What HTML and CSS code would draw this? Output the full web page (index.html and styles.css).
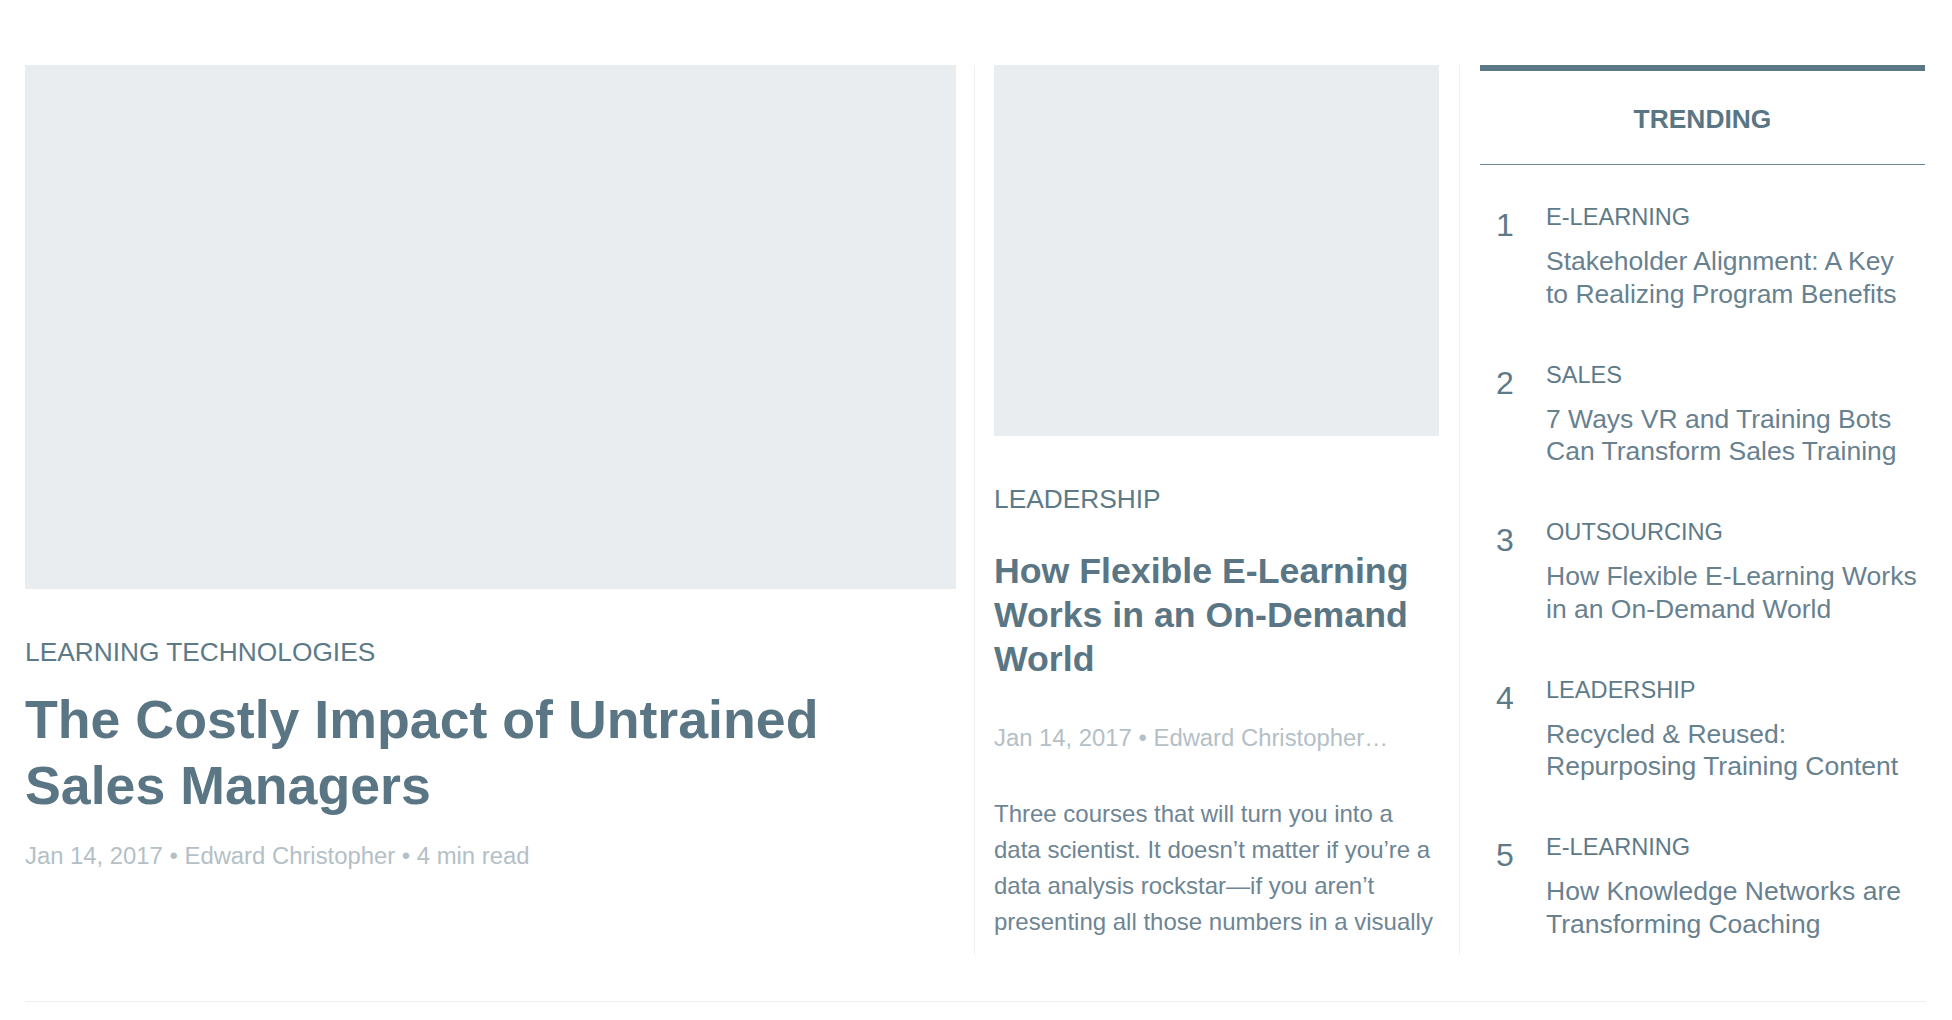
FILE: index.html
```html
<!DOCTYPE html>
<html lang="en">
<head>
<meta charset="utf-8">
<title>Featured stories</title>
<link rel="stylesheet" href="styles.css">
</head>
<body>
<main class="page">
  <section class="feature-section">
    <div class="feature-row">
      <article class="lead-story">
        <div class="thumb thumb-wide"></div>
        <div class="category">LEARNING TECHNOLOGIES</div>
        <h2 class="lead-title">The Costly Impact of Untrained Sales Managers</h2>
        <div class="meta">Jan 14, 2017 • Edward Christopher • 4 min read</div>
      </article>

      <article class="side-story">
        <div class="thumb thumb-tall"></div>
        <div class="category">LEADERSHIP</div>
        <h3 class="side-title">How Flexible E-Learning Works in an On-Demand World</h3>
        <div class="meta">Jan 14, 2017 • Edward Christopher…</div>
        <p class="excerpt">Three courses that will turn you into a data scientist. It doesn’t matter if you’re a data analysis rockstar—if you aren’t presenting all those numbers in a visually</p>
      </article>

      <aside class="trending">
        <h4 class="trending-head">TRENDING</h4>
        <ol class="trending-list">
          <li class="trend-item">
            <span class="trend-num">1</span>
            <div class="trend-body">
              <div class="trend-cat">E-LEARNING</div>
              <div class="trend-title">Stakeholder Alignment: A Key to Realizing Program Benefits</div>
            </div>
          </li>
          <li class="trend-item">
            <span class="trend-num">2</span>
            <div class="trend-body">
              <div class="trend-cat">SALES</div>
              <div class="trend-title">7 Ways VR and Training Bots Can Transform Sales Training</div>
            </div>
          </li>
          <li class="trend-item">
            <span class="trend-num">3</span>
            <div class="trend-body">
              <div class="trend-cat">OUTSOURCING</div>
              <div class="trend-title">How Flexible E-Learning Works in an On-Demand World</div>
            </div>
          </li>
          <li class="trend-item">
            <span class="trend-num">4</span>
            <div class="trend-body">
              <div class="trend-cat">LEADERSHIP</div>
              <div class="trend-title">Recycled &amp; Reused: Repurposing Training Content</div>
            </div>
          </li>
          <li class="trend-item">
            <span class="trend-num">5</span>
            <div class="trend-body">
              <div class="trend-cat">E-LEARNING</div>
              <div class="trend-title">How Knowledge Networks are Transforming Coaching</div>
            </div>
          </li>
        </ol>
      </aside>
    </div>
  </section>
</main>
</body>
</html>
```

FILE: styles.css
```css
* {
  box-sizing: border-box;
}

html, body {
  margin: 0;
  padding: 0;
  background: #ffffff;
}

body {
  font-family: "Liberation Sans", Arial, Helvetica, sans-serif;
  color: #5a7684;
}

.page {
  padding: 65px 25px 0 25px;
}

.feature-section {
  width: 1901px;
  padding-bottom: 46px;
  border-bottom: 1px solid #eceff1;
}

.feature-row {
  display: flex;
  align-items: stretch;
  height: 890px;
}

.lead-story {
  width: 931px;
  flex: none;
}

.side-story {
  flex: none;
  width: 485px;
  margin-left: 18px;
  padding: 0 20px 0 19px;
  border-left: 1px solid #eef0f2;
}

.trending {
  flex: none;
  width: 466px;
  padding-left: 20px;
  border-left: 1px solid #eef0f2;
}

.thumb {
  background: #e9edf0;
}

.thumb-wide {
  height: 524px;
}

.thumb-tall {
  height: 371px;
}

.category {
  margin-top: 47px;
  font-size: 26.3px;
  line-height: 32px;
  color: #5d7a88;
}

.lead-title {
  margin: 19px 0 0 0;
  max-width: 860px;
  font-size: 53.7px;
  line-height: 65.6px;
  font-weight: 700;
  color: #5a7684;
}

.meta {
  font-size: 23.85px;
  line-height: 30px;
  color: #b4c0c6;
  white-space: nowrap;
}

.lead-story .meta {
  margin-top: 23px;
}

.side-title {
  margin: 35px 0 0 0;
  font-size: 35.7px;
  line-height: 43.75px;
  font-weight: 700;
  color: #5a7684;
}

.side-story .meta {
  margin-top: 42px;
}

.excerpt {
  margin: 43px 0 0 0;
  font-size: 24px;
  line-height: 35.8px;
  color: #6e8593;
}

.trending-head {
  margin: 0;
  border-top: 6px solid #5a7886;
  border-bottom: 1px solid #6d8694;
  padding-top: 3px;
  height: 100px;
  line-height: 90px;
  text-align: center;
  font-size: 26.4px;
  font-weight: 700;
  color: #5a7684;
}

.trending-list {
  list-style: none;
  margin: 0;
  padding: 37px 0 0 16px;
}

.trend-item {
  display: flex;
  align-items: flex-start;
  margin-bottom: 49.5px;
}

.trend-num {
  flex: none;
  width: 50px;
  font-size: 32px;
  line-height: 46px;
  color: #5e7a88;
}

.trend-body {
  flex: none;
  width: 373px;
}

.trend-cat {
  font-size: 23.6px;
  line-height: 30px;
  color: #5e7a88;
}

.trend-title {
  margin-top: 13px;
  font-size: 26.5px;
  line-height: 32.5px;
  color: #68818f;
}
```
